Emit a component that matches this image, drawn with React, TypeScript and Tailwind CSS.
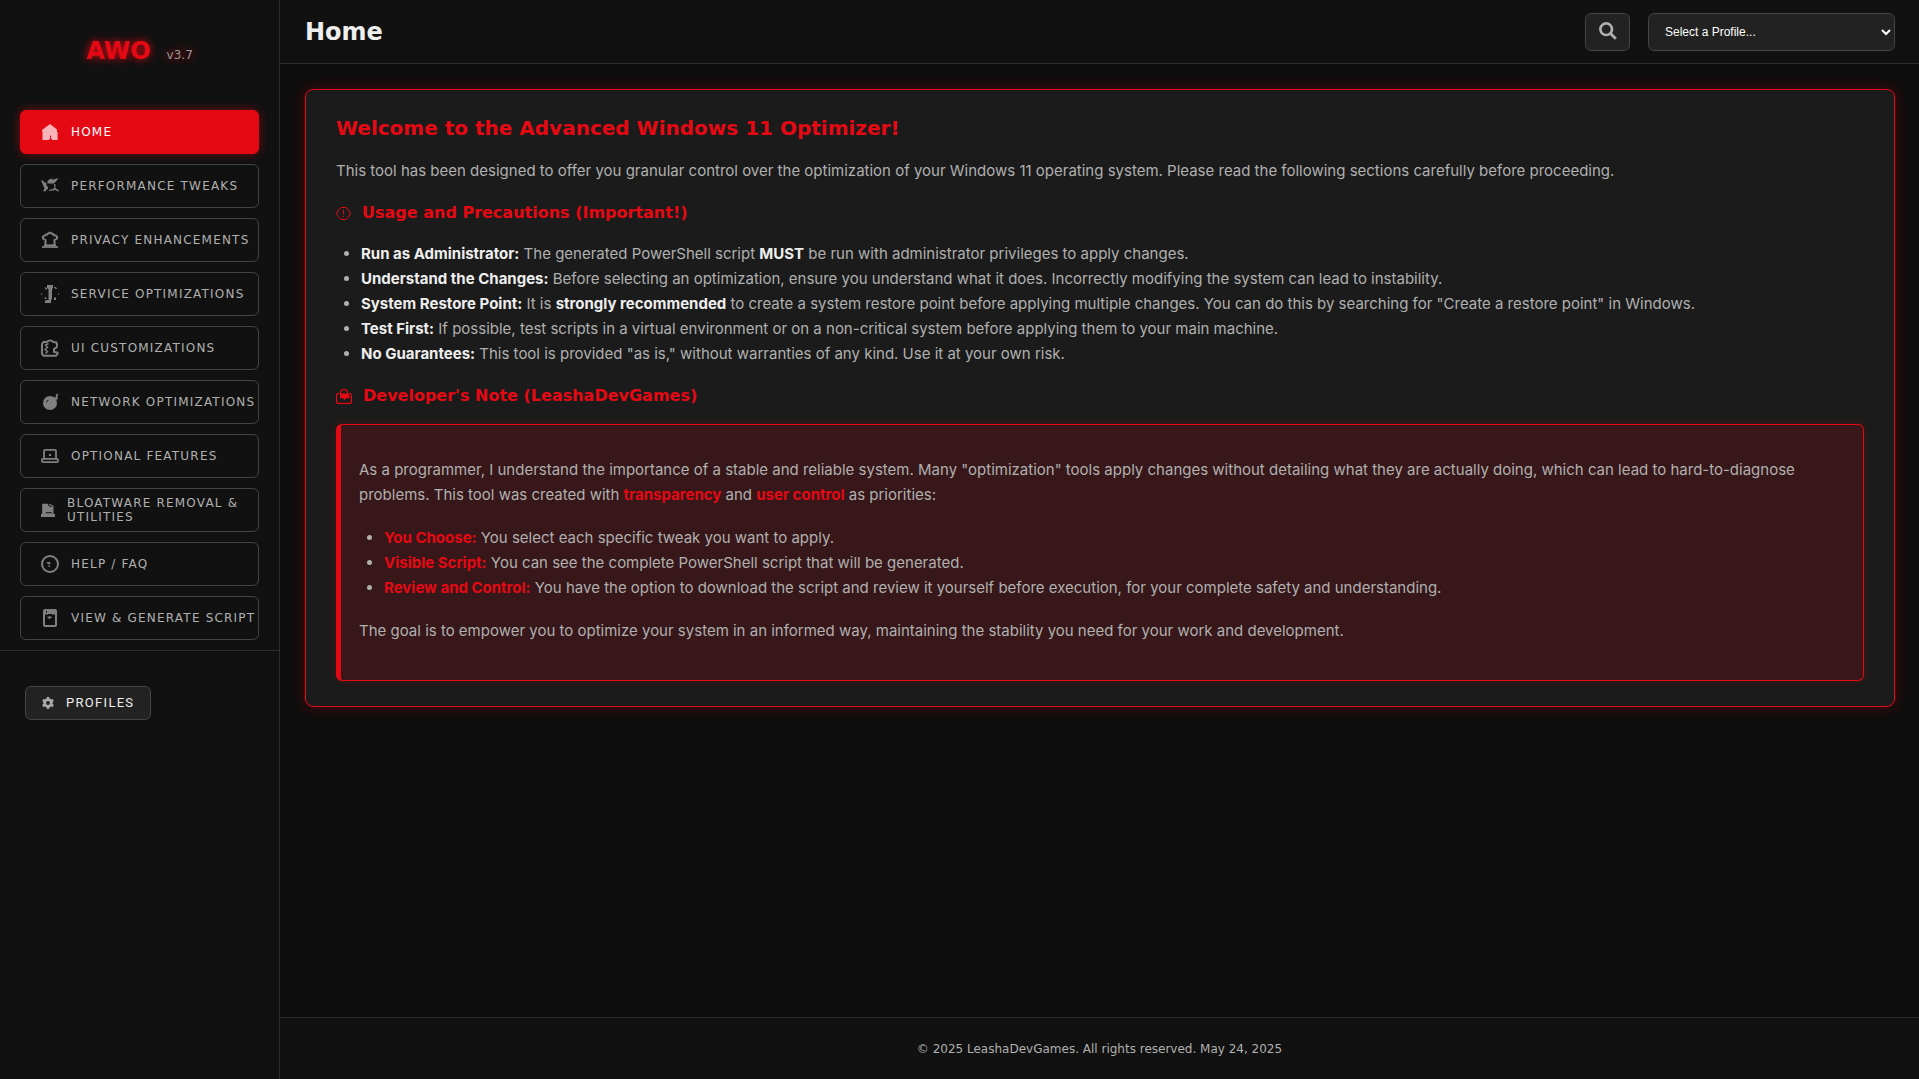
import type { ReactNode } from 'react';

type IconName =
  | 'home'
  | 'tools'
  | 'privacy'
  | 'service'
  | 'ui'
  | 'network'
  | 'laptop'
  | 'trash'
  | 'help'
  | 'script';

// `wrap` marks labels too long for one line; those also get the smaller icon.
const NAV: { label: string; icon: IconName; wrap?: boolean }[] = [
  { label: 'Home', icon: 'home' },
  { label: 'Performance Tweaks', icon: 'tools' },
  { label: 'Privacy Enhancements', icon: 'privacy' },
  { label: 'Service Optimizations', icon: 'service' },
  { label: 'UI Customizations', icon: 'ui' },
  { label: 'Network Optimizations', icon: 'network' },
  { label: 'Optional Features', icon: 'laptop' },
  { label: 'Bloatware Removal & Utilities', icon: 'trash', wrap: true },
  { label: 'Help / FAQ', icon: 'help' },
  { label: 'View & Generate Script', icon: 'script' },
];

const ICONS: Record<IconName, ReactNode> = {
  home: (
    <path fill="currentColor" d="M9 1 16 6.500V9h.6v8h-5.400v-1H10v-3.500H9V16h-.8v1H1.500V8.500H1V7Z" />
  ),
  tools: (
    <g fill="currentColor">
      <path d="M0 3.500h2l1.500 2 2 .5v2.500L7 10v2l-2 1-.5 1.500L2 14l1.500-2.500L2 8Z" />
      <path d="M6 5 8 2.500 12 1.500 11 3 14 2 17.500 1 15 4.500 12.500 6.500H7Z" />
      <path d="m12.500 6.500 2 1v4L17 12.500l1 2.500-3.500-2L8 14v-1l5-1.500.5-2Z" />
    </g>
  ),
  privacy: (
    <g fill="none" stroke="currentColor">
      <path strokeWidth="2" d="M4.500 14V9L2 7.500V5.500L6 3l3-1.500L12 3l4 2.500v2L13.500 9v5" />
      <path strokeWidth="1" d="M5 5.500 7 3.500M13 5.500 11 3.500" />
      <path strokeWidth="1.600" d="M3 14.200h12" />
      <path strokeWidth="1.800" d="M1 16h16" />
    </g>
  ),
  service: (
    <g fill="currentColor">
      <path d="M6 0h6v3h-.5v1.500H11V14h-.500v1H10v3H4v-2.500l2-.500h1.500V4H6.500V3H6Z" />
      <path d="M0 8.500h1.200v1.200H0zM17 8.500h1v1.200h-1zM3.500 2.500h2L6 4.500H4.500zM13 2h2l1 2h-1.500zM3.500 12.500h2V14h-2zM13 12.500h2V15h-2z" />
    </g>
  ),
  ui: (
    <g fill="none" stroke="currentColor" strokeWidth="2">
      <path d="M1 15V5L2.500 3H5.500Q9 0 12.500 3L15.500 3.500Q16.500 6 15.500 8.500L13 10V13L16.500 13.500V15L15 16.800H2.500Z" />
      <path d="M7.500 4.500 4.500 6 6.500 8.500 4 10.500 6.500 12.500 4.500 14.500" strokeWidth="1.400" />
    </g>
  ),
  network: (
    <>
      <circle cx="9" cy="10" r="7" fill="currentColor" />
      <path d="M12 5 14.500 4.500 15 1.500 17.500.5 16.500 3 16.500 7Z" fill="currentColor" />
      <path d="M5.500 9.500 6 8l1.500-.8" fill="none" stroke="#111" strokeWidth=".8" />
    </>
  ),
  laptop: (
    <g fill="none" stroke="currentColor" strokeWidth="1.800">
      <path d="M3 12V4Q3 2.800 4.200 2.800H13.800Q15 2.800 15 4V12" />
      <rect x=".9" y="11.900" width="16.200" height="3.200" rx="1.300" />
      <path d="M8 8h2" />
    </g>
  ),
  trash: (
    <>
      <path d="M1.500 1h9L16 3.500V14h2v4H0v-4h1.500Z" fill="currentColor" />
      <path d="M10 0v3.500l4 1M6 12.500h8" stroke="#111" strokeWidth="1.300" fill="none" />
    </>
  ),
  help: (
    <>
      <circle cx="9" cy="9" r="8" fill="none" stroke="currentColor" strokeWidth="2" />
      <path d="M5.800 7H9.200v2.500H7.500V8.500H5.800zM7.500 10.500H9v1.400H7.500z" fill="currentColor" />
    </>
  ),
  script: (
    <>
      <rect x="3" y="1" width="12" height="16" rx="1" fill="none" stroke="currentColor" strokeWidth="2" />
      <path d="M3 1h12v4.500h-4V5H7v.5H3zM6.500 7.500h4V9h-1v.8H7.500V9h-1z" fill="currentColor" />
      <path d="M5.500 1.500V4" stroke="#111" strokeWidth=".8" />
    </>
  ),
};

function NavIcon({ name, small }: { name: IconName; small?: boolean }) {
  return (
    <svg
      viewBox="0 0 18 18"
      className={small ? 'size-3.5 shrink-0 opacity-70' : 'size-[18px] shrink-0 opacity-70'}
      aria-hidden="true"
    >
      {ICONS[name]}
    </svg>
  );
}

function Sidebar() {
  return (
    <aside className="w-[280px] shrink-0 border-r border-[#2d2d2d] bg-[#111111]">
      <div className="flex h-[110px] items-start justify-center pt-[33px]">
        <div className="flex items-baseline gap-4 [text-shadow:0_0_8px_#e50914]">
          <span className="text-2xl leading-9 font-bold text-[#e50914]">AWO</span>
          <span className="text-xs text-[#999999]">v3.7</span>
        </div>
      </div>

      <nav className="flex flex-col gap-2.5 border-b border-[#2d2d2d] px-5 pb-2.5">
        {NAV.map((item, i) => (
          <button
            key={item.label}
            type="button"
            className={
              i === 0
                ? 'flex h-11 items-center gap-3 rounded-md border border-[#e50914] bg-[#e50914] pl-5 text-left text-xs leading-[14px] tracking-widest text-white uppercase shadow-[0_0_10px_rgba(229,9,20,0.5)]'
                : 'flex h-11 items-center gap-3 rounded-md border border-[#444444] pl-5 text-left text-xs leading-[14px] tracking-widest text-[#b0b0b0] uppercase'
            }
          >
            <NavIcon name={item.icon} small={item.wrap} />
            <span className={item.wrap ? '' : 'whitespace-nowrap'}>{item.label}</span>
          </button>
        ))}
      </nav>

      <div className="px-[25px] pt-[35px]">
        <button
          type="button"
          className="flex items-center gap-3 rounded-md border border-[#444444] bg-[#222222] px-4 py-2 font-[Roboto,sans-serif] text-[13px] leading-4 tracking-widest text-[#eeeeee] uppercase"
        >
          <svg viewBox="0 0 12 12" className="size-3 text-[#aaaaaa]" aria-hidden="true">
            <circle cx="6" cy="6" r="3.300" fill="none" stroke="currentColor" strokeWidth="2.800" />
            <path
              d="M6 0v2M6 10v2M.8 3l1.800 1M9.400 8l1.800 1M.8 9l1.800-1M9.400 4l1.800-1"
              stroke="currentColor"
              strokeWidth="2.600"
            />
          </svg>
          Profiles
        </button>
      </div>
    </aside>
  );
}

function Header() {
  return (
    <header className="flex h-16 items-center justify-between border-b border-[#2d2d2d] bg-[#111111] pr-6 pl-[25px]">
      <h1 className="text-2xl leading-8 font-bold text-[#eeeeee]">Home</h1>
      <div className="flex items-center gap-[18px]">
        <button
          type="button"
          aria-label="Search"
          className="flex h-[38px] w-[45px] items-center justify-center rounded-md border border-[#444444] bg-[#222222] text-[#b0b0b0]"
        >
          <svg viewBox="0 0 18 18" className="mb-0.5 size-[18px]" fill="none" stroke="currentColor" aria-hidden="true">
            <circle cx="7.200" cy="7.200" r="5.800" strokeWidth="2.600" />
            <path d="m11.500 11.500 5.300 5.300" strokeWidth="2.800" />
          </svg>
        </button>
        <select
          aria-label="Profile"
          className="h-[38px] w-[247px] rounded-md border border-[#444444] bg-[#222222] px-3 font-['Liberation_Sans',Arial,sans-serif] text-xs text-white"
        >
          <option>Select a Profile...</option>
        </select>
      </div>
    </header>
  );
}

function Strong({ children }: { children: ReactNode }) {
  return <strong className="font-bold text-[#eeeeee]">{children}</strong>;
}

function Accent({ children }: { children: ReactNode }) {
  return <strong className="font-bold text-[#e50914]">{children}</strong>;
}

function WelcomeCard() {
  return (
    <section className="rounded-lg border border-[#e50914] bg-[#1b1b1b] px-[30px] pt-6 pb-[25px] shadow-[0_0_15px_rgba(229,9,20,0.3)]">
      <h2 className="font-['DejaVu_Sans',sans-serif] text-xl leading-7 font-bold text-[#e50914]">
        Welcome to the Advanced Windows 11 Optimizer!
      </h2>
      <p className="mt-4">
        This tool has been designed to offer you granular control over the optimization of your Windows 11
        operating system. Please read the following sections carefully before proceeding.
      </p>

      <h3 className="mt-[18px] flex items-center gap-[11px] font-['DejaVu_Sans',sans-serif] text-base leading-6 font-bold text-[#e50914]">
        <svg viewBox="0 0 15 15" className="size-[15px]" fill="none" stroke="currentColor" aria-hidden="true">
          <path d="M5 1.500h5L14 6v3l-4 4.500H5L1 9V6Z" />
          <path d="M7.500 4v4M7.500 9.500v1.500" />
        </svg>
        Usage and Precautions (Important!)
      </h3>
      <ul className="mt-4 list-disc pl-[25px]">
        <li>
          <Strong>Run as Administrator:</Strong> The generated PowerShell script <Strong>MUST</Strong> be run with
          administrator privileges to apply changes.
        </li>
        <li>
          <Strong>Understand the Changes:</Strong> Before selecting an optimization, ensure you understand what it
          does. Incorrectly modifying the system can lead to instability.
        </li>
        <li>
          <Strong>System Restore Point:</Strong> It is <Strong>strongly recommended</Strong> to create a system
          restore point before applying multiple changes. You can do this by searching for "Create a restore point"
          in Windows.
        </li>
        <li>
          <Strong>Test First:</Strong> If possible, test scripts in a virtual environment or on a non-critical
          system before applying them to your main machine.
        </li>
        <li>
          <Strong>No Guarantees:</Strong> This tool is provided "as is," without warranties of any kind. Use it at
          your own risk.
        </li>
      </ul>

      <h3 className="mt-[18px] flex items-center gap-[11px] font-['DejaVu_Sans',sans-serif] text-base leading-6 font-bold text-[#e50914]">
        <svg viewBox="0 0 16 15" className="h-[15px] w-4" fill="none" stroke="currentColor" aria-hidden="true">
          <path d="M4.500 5V2.500L6 .8h4l1.500 1.700V5" strokeWidth="1.200" />
          <path d="M3.500 4.500H1.500L.6 5.500v7.500l1 1.300h12.800l1-1.300V5.500l-1-1h-2" strokeWidth="1.200" />
          <path d="M4 4.500h8l1.500 2v2.500L10 9.500 8.500 11 7 9.500 4 9Z" fill="currentColor" stroke="none" />
        </svg>
        Developer's Note (LeashaDevGames)
      </h3>
      <div className="mt-4 rounded-md border border-l-[5px] border-[#e50914] bg-[#371719] px-[18px] pt-8 pb-[37px] shadow-[0_0_10px_rgba(229,9,20,0.2)]">
        <p>
          As a programmer, I understand the importance of a stable and reliable system. Many "optimization" tools
          apply changes without detailing what they are actually doing, which can lead to hard-to-diagnose problems.
          This tool was created with <Accent>transparency</Accent> and <Accent>user control</Accent> as priorities:
        </p>
        <ul className="mt-[18px] list-disc pl-[25px]">
          <li>
            <Accent>You Choose:</Accent> You select each specific tweak you want to apply.
          </li>
          <li>
            <Accent>Visible Script:</Accent> You can see the complete PowerShell script that will be generated.
          </li>
          <li>
            <Accent>Review and Control:</Accent> You have the option to download the script and review it yourself
            before execution, for your complete safety and understanding.
          </li>
        </ul>
        <p className="mt-[18px]">
          The goal is to empower you to optimize your system in an informed way, maintaining the stability you need
          for your work and development.
        </p>
      </div>
    </section>
  );
}

export default function App() {
  return (
    <div className="flex min-h-screen bg-[#0d0d0d] font-['DejaVu_Sans',sans-serif] text-[#b0b0b0]">
      <Sidebar />
      <div className="flex min-w-0 flex-1 flex-col">
        <Header />
        <main className="flex-1 py-[25px] pr-6 pl-[25px] font-[Inter,sans-serif] text-[15px] leading-[25px]">
          <WelcomeCard />
        </main>
        <footer className="border-t border-[#2d2d2d] bg-[#111111] pt-[21px] pb-5 text-center text-xs leading-5">
          © 2025 LeashaDevGames. All rights reserved. May 24, 2025
        </footer>
      </div>
    </div>
  );
}
